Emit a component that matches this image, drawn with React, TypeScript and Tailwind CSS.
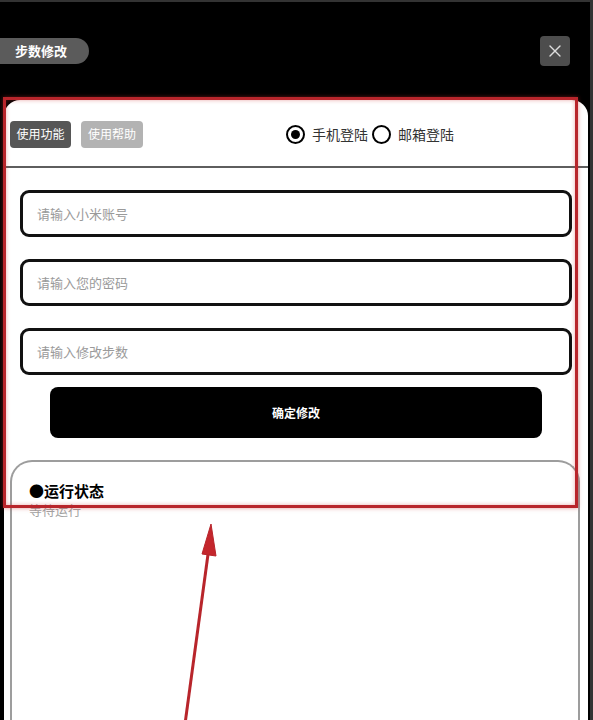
import { X } from "lucide-react";

const font = { fontFamily: '"Noto Sans CJK SC", "Noto Sans", sans-serif' };

function Radio({ checked, label }: { checked?: boolean; label: string }) {
  return (
    <label className="flex items-center gap-[7px]">
      <span className="flex size-[19px] items-center justify-center rounded-full border-2 border-black">
        {checked && <span className="size-[9px] rounded-full bg-black" />}
      </span>
      <span className="text-[14px] text-[#333]">{label}</span>
    </label>
  );
}

function Field({ placeholder }: { placeholder: string }) {
  return (
    <input
      placeholder={placeholder}
      className="h-[47px] w-full shrink-0 rounded-[9px] border-[3px] border-[#111] bg-white px-[14px] text-[13px] text-[#333] outline-none placeholder:text-[#9a9a9a]"
    />
  );
}

export default function App() {
  return (
    <div
      className="relative flex h-[720px] w-[593px] flex-col overflow-hidden border-t-2 border-r-[3px] border-[#333] bg-black"
      style={font}
    >
      {/* dialog header */}
      <header className="flex h-[98px] shrink-0 items-center justify-between pr-[20px]">
        <span className="flex h-[26px] items-center rounded-r-full bg-[#5b5b5b] pr-[22px] pl-[15px] text-[13px] font-bold text-white">
          步数修改
        </span>
        <button
          type="button"
          aria-label="Close"
          className="flex size-[30px] items-center justify-center rounded-[4px] bg-[#4d4d4d] text-[#ddd]"
        >
          <X className="size-[20px]" strokeWidth={1.6} />
        </button>
      </header>

      <main className="ml-[4px] mr-[2px] flex flex-1 flex-col rounded-t-[16px] bg-white">
        <div className="flex h-[66px] shrink-0 items-center pt-[2px] pl-[6px]">
          <button
            type="button"
            className="h-[27px] w-[61px] rounded-[4px] bg-[#565656] text-[12px] text-white"
          >
            使用功能
          </button>
          <button
            type="button"
            className="ml-[10px] h-[27px] w-[62px] rounded-[4px] bg-[#b3b3b3] text-[12px] text-white"
          >
            使用帮助
          </button>
          <div className="ml-[143px] flex items-center gap-[4px]">
            <Radio checked label="手机登陆" />
            <Radio label="邮箱登陆" />
          </div>
        </div>
        <div className="h-[2px] shrink-0 bg-[#5e5e5e]" />

        <div className="mt-[22px] flex flex-col gap-[22px] pr-[16px] pl-[16px]">
          <Field placeholder="请输入小米账号" />
          <Field placeholder="请输入您的密码" />
          <Field placeholder="请输入修改步数" />
        </div>

        <button
          type="button"
          className="mx-auto mt-[12px] h-[51px] w-[492px] shrink-0 rounded-[8px] bg-black text-[12px] font-bold text-white"
        >
          确定修改
        </button>

        <section className="mt-[22px] ml-[6px] mr-[8px] flex-1 rounded-t-[22px] border-2 border-b-0 border-[#9d9d9d] px-[17px] pt-[20px]">
          <h3 className="text-[15px] leading-[17px] font-bold text-black">●运行状态</h3>
          <p className="mt-[3px] text-[13px] leading-[15px] text-[#a3a3a3]">等待运行</p>
        </section>
      </main>

      {/* red annotation: box and arrow */}
      <div className="pointer-events-none absolute top-[95px] left-[3px] h-[411px] w-[575px] border-[3px] border-[#b8252b] shadow-[0_0_4px_rgba(200,40,40,0.5),inset_0_0_4px_rgba(200,40,40,0.4)]" />
      <svg
        className="pointer-events-none absolute top-0 left-0"
        width="593"
        height="720"
        viewBox="0 0 593 720"
        aria-hidden="true"
      >
        <line x1="185" y1="722" x2="209" y2="545" stroke="#b8252b" strokeWidth="3" />
        <path d="M211 522 L202 552 L216 554 Z" fill="#c4262c" stroke="#b8252b" strokeWidth="1" />
      </svg>
    </div>
  );
}
